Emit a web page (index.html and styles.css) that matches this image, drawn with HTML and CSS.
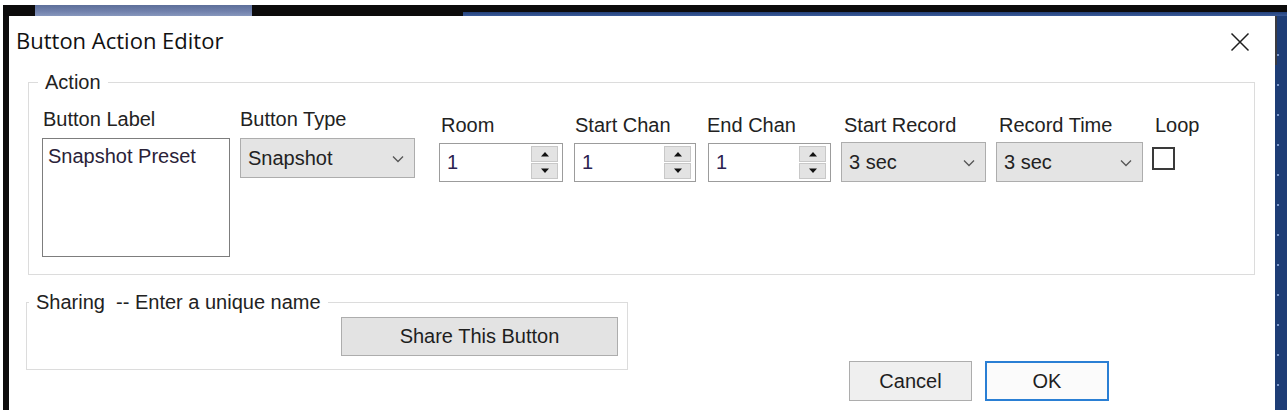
FILE: index.html
```html
<!DOCTYPE html>
<html lang="en">
<head>
<meta charset="utf-8">
<title>Button Action Editor</title>
<link rel="stylesheet" href="styles.css">
</head>
<body>
<div class="screen">
  <div class="topbar">
    <div class="tb-black tb-a"></div>
    <div class="tb-blue"></div>
    <div class="tb-black tb-b"></div>
    <div class="tb-line"></div>
  </div>
  <div class="middle">
    <div class="left-edge"></div>
    <div class="dialog">
      <div class="titlebar">
        <div class="title">Button Action Editor</div>
        <svg class="close" width="20" height="20" viewBox="0 0 20 20"><path d="M1.5 1.5 L18.5 18.5 M18.5 1.5 L1.5 18.5" stroke="#1e1e1e" stroke-width="1.5" fill="none"/></svg>
      </div>

      <fieldset class="group action">
        <legend class="legend legend-action">Action</legend>
        <div class="fields">
          <div class="col col-label">
            <div class="lbl lbl-1">Button Label</div>
            <div class="textbox">Snapshot Preset</div>
          </div>
          <div class="col col-type">
            <div class="lbl">Button Type</div>
            <div class="combo combo-type"><span>Snapshot</span><svg class="chev" width="12" height="8" viewBox="0 0 12 8"><path d="M1 1.5 L6 6.5 L11 1.5" stroke="#555" stroke-width="1.3" fill="none"/></svg></div>
          </div>
          <div class="col low col-room">
            <div class="lbl lbl-2">Room</div>
            <div class="num"><span>1</span><div class="spin"><div class="sb"><svg width="10" height="6" viewBox="0 0 10 6"><path d="M1 5.5 L5 1 L9 5.5Z" fill="#111"/></svg></div><div class="sb"><svg width="10" height="6" viewBox="0 0 10 6"><path d="M1 0.5 L5 5 L9 0.5Z" fill="#111"/></svg></div></div></div>
          </div>
          <div class="col low col-start">
            <div class="lbl lbl-1">Start Chan</div>
            <div class="num"><span>1</span><div class="spin"><div class="sb"><svg width="10" height="6" viewBox="0 0 10 6"><path d="M1 5.5 L5 1 L9 5.5Z" fill="#111"/></svg></div><div class="sb"><svg width="10" height="6" viewBox="0 0 10 6"><path d="M1 0.5 L5 5 L9 0.5Z" fill="#111"/></svg></div></div></div>
          </div>
          <div class="col low col-end">
            <div class="lbl lbl-0">End Chan</div>
            <div class="num"><span>1</span><div class="spin"><div class="sb"><svg width="10" height="6" viewBox="0 0 10 6"><path d="M1 5.5 L5 1 L9 5.5Z" fill="#111"/></svg></div><div class="sb"><svg width="10" height="6" viewBox="0 0 10 6"><path d="M1 0.5 L5 5 L9 0.5Z" fill="#111"/></svg></div></div></div>
          </div>
          <div class="col low col-srec">
            <div class="lbl lbl-3">Start Record</div>
            <div class="combo combo-low"><span>3 sec</span><svg class="chev" width="12" height="8" viewBox="0 0 12 8"><path d="M1 1.5 L6 6.5 L11 1.5" stroke="#555" stroke-width="1.3" fill="none"/></svg></div>
          </div>
          <div class="col low col-rtime">
            <div class="lbl lbl-3">Record Time</div>
            <div class="combo combo-low"><span>3 sec</span><svg class="chev" width="12" height="8" viewBox="0 0 12 8"><path d="M1 1.5 L6 6.5 L11 1.5" stroke="#555" stroke-width="1.3" fill="none"/></svg></div>
          </div>
          <div class="col low col-loop">
            <div class="lbl lbl-3">Loop</div>
            <div class="check"></div>
          </div>
        </div>
      </fieldset>

      <div class="bottom">
        <fieldset class="group sharing">
          <legend class="legend legend-share">Sharing&nbsp; -- Enter a unique name</legend>
          <div class="btn share">Share This Button</div>
        </fieldset>
        <div class="btn cancel">Cancel</div>
        <div class="btn ok">OK</div>
      </div>
    </div>
    <div class="right-edge"></div>
  </div>
</div>
</body>
</html>
```

FILE: styles.css
```css
html, body {
  margin: 0;
  padding: 0;
  background: #ffffff;
}

.screen {
  width: 1287px;
  height: 417px;
  box-sizing: border-box;
  padding: 5px 0 7px 3px;
  display: flex;
  flex-direction: column;
  background: #ffffff;
  overflow: hidden;
  font-family: "Liberation Sans", Arial, sans-serif;
  font-size: 20px;
  color: #202020;
}

/* ---------- desktop frame ---------- */
.topbar {
  height: 11px;
  display: flex;
  background: #0c0b0b;
}
.tb-a { width: 32px; }
.tb-blue {
  width: 217px;
  background: linear-gradient(#5d6f9a, #7282ad 60%, #8797bd);
}
.tb-b { width: 211px; }
.tb-line {
  flex: 1;
  background: linear-gradient(#0c0b0b 0 7px, #23407a 7px, #3a5a98 11px);
}

.middle {
  flex: 1;
  display: flex;
}
.left-edge {
  width: 6px;
  background: #0e0d0d;
}
.right-edge {
  width: 12px;
  background:
    linear-gradient(#3b3b40, #3b3b40) no-repeat 0 0 / 2px 49px,
    repeating-linear-gradient(to bottom, transparent 0 28px, #7b96c8 28px 30px) no-repeat 2px 10px / 2px 100%,
    #1e3d76;
}

/* ---------- dialog ---------- */
.dialog {
  flex: 1;
  background: #ffffff;
  display: flex;
  flex-direction: column;
}

.titlebar {
  display: flex;
  justify-content: space-between;
  align-items: flex-start;
  padding: 9px 25px 0 7px;
}
.title {
  font-family: "Open Sans", "Noto Sans", sans-serif;
  font-size: 22px;
  line-height: 30px;
  color: #111;
}
.close {
  margin-top: 7px;
}

.group {
  border: 1px solid #dcdcdc;
  padding: 0;
  margin: 0;
  min-width: 0;
}
.legend {
  padding: 0 7px;
  line-height: 24px;
  color: #222;
  white-space: nowrap;
}

.action {
  margin: 15px 20px 0 19px;
}
.legend-action {
  margin-left: 9px;
}

.fields {
  display: flex;
  align-items: flex-start;
  padding: 13px 0 17px 13px;
}
.col {
  display: flex;
  flex-direction: column;
}
.col.low {
  margin-top: 6px;
}
.lbl {
  line-height: 24px;
  white-space: nowrap;
  color: #222;
}
.lbl-0 { margin-left: -1px; }
.lbl-1 { margin-left: 1px; }
.lbl-2 { margin-left: 2px; }
.lbl-3 { margin-left: 3px; }

.col-label { width: 188px; margin-right: 10px; }
.col-type  { width: 175px; margin-right: 24px; }
.col-room  { width: 124px; margin-right: 11px; }
.col-start { width: 122px; margin-right: 12px; }
.col-end   { width: 123px; margin-right: 10px; }
.col-srec  { width: 145px; margin-right: 10px; }
.col-rtime { width: 147px; margin-right: 9px; }
.col-loop  { width: 40px; }

.textbox {
  margin-top: 7px;
  height: 119px;
  box-sizing: border-box;
  border: 1px solid #7d7d7d;
  padding: 5px 0 0 5px;
  line-height: 24px;
  color: #2a2238;
  background: #fff;
}

.combo {
  box-sizing: border-box;
  height: 40px;
  background: #e4e4e4;
  border: 1px solid #adadad;
  display: flex;
  align-items: center;
  justify-content: space-between;
  padding: 0 10px 0 7px;
  color: #222;
}
.combo-type {
  margin-top: 7px;
}
.combo-low {
  margin-top: 5px;
  padding-left: 7px;
}
.chev {
  margin-top: 1px;
}

.num {
  margin-top: 6px;
  box-sizing: border-box;
  height: 39px;
  border: 1px solid #9c9c9c;
  display: flex;
  align-items: center;
  justify-content: space-between;
  padding: 0 4px 0 7px;
  color: #2b2250;
  background: #fff;
}
.spin {
  width: 27px;
  height: 33px;
  display: flex;
  flex-direction: column;
  gap: 1px;
}
.sb {
  flex: 1;
  background: #e3e3e3;
  border: 1px solid #c8c8c8;
  display: flex;
  align-items: center;
  justify-content: center;
}

.check {
  margin-top: 10px;
  width: 23px;
  height: 23px;
  box-sizing: border-box;
  border: 2px solid #3a3a3a;
  background: #fff;
}

/* ---------- bottom ---------- */
.bottom {
  display: flex;
  align-items: flex-start;
  margin-top: 15px;
}
.sharing {
  margin-left: 17px;
  width: 602px;
  box-sizing: border-box;
  padding: 3px 0 13px 0;
}
.legend-share {
  margin-left: 2px;
}

.btn {
  box-sizing: border-box;
  display: flex;
  align-items: center;
  justify-content: center;
  color: #1e1e1e;
}
.share {
  margin-left: 314px;
  width: 277px;
  height: 39px;
  background: #e3e3e3;
  border: 1px solid #adadad;
}
.cancel {
  margin: 71px 0 0 221px;
  width: 123px;
  height: 40px;
  background: #efefef;
  border: 1px solid #adadad;
}
.ok {
  margin: 71px 0 0 13px;
  width: 124px;
  height: 40px;
  background: #fbfbfb;
  border: 2px solid #2a7fd4;
}
```
